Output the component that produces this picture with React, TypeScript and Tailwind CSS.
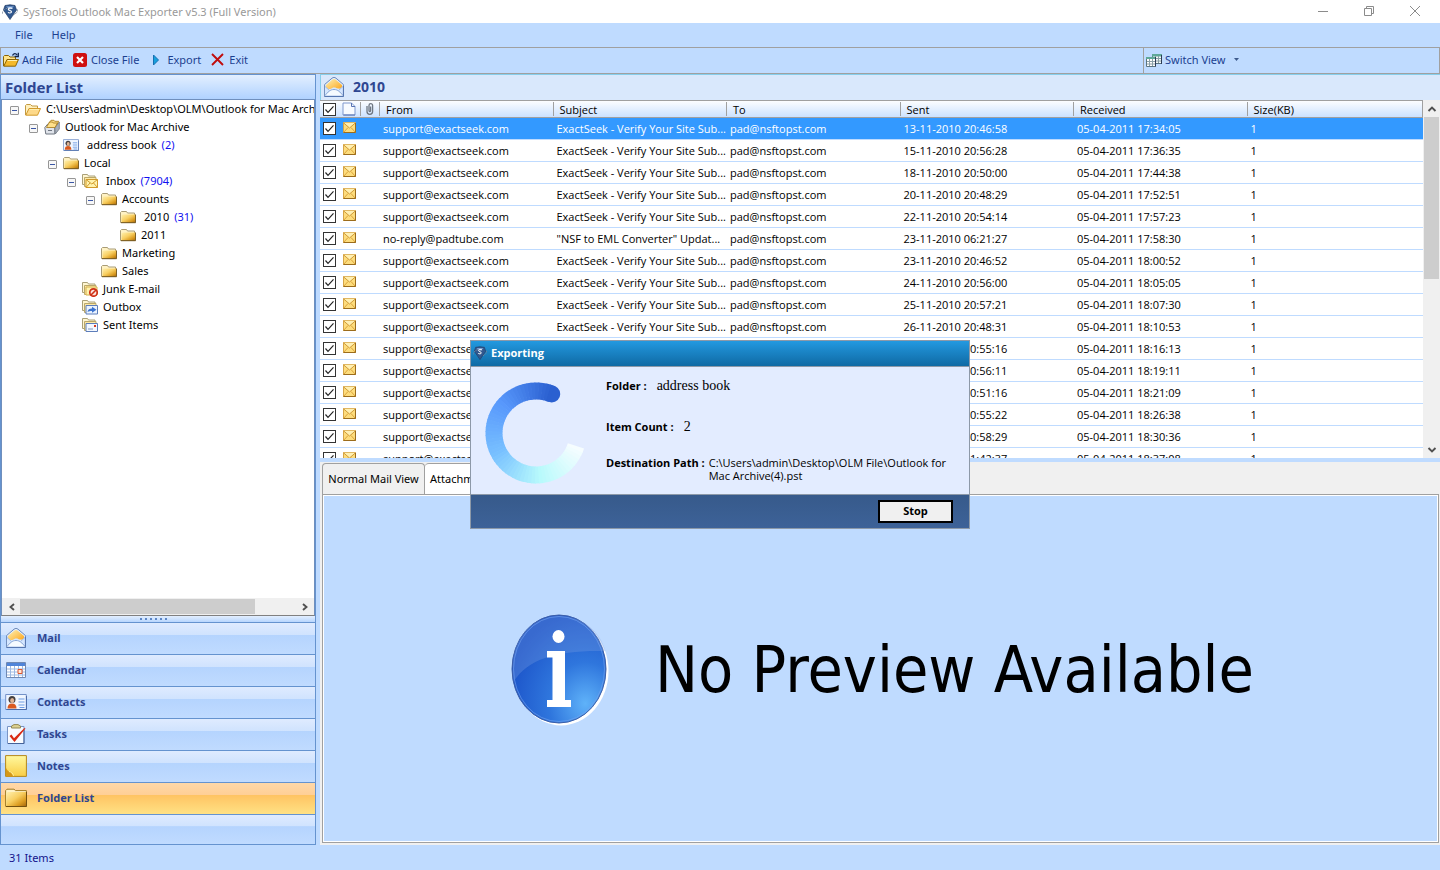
import React from "react";

type IconProps = { className?: string };

function AppLogo({ className = "h-4 w-4" }: IconProps) {
  return (
    <svg viewBox="0 0 16 16" className={className} aria-hidden="true">
      <path d="M3 1.500 8 .8l5 .7 1.500 4.500L8 15.500 1.500 6Z" fill="#31588f" stroke="#1f3b66" strokeWidth=".7" />
      <path d="M4 2.500h8l-4 3Z" fill="#8fb4e6" />
      <path d="M10.400 4.600C9 3.600 6 3.900 6.400 5.500c.3 1.300 3.300.8 3.100 2.500-.2 1.300-2.500 1.200-3.500.4" fill="none" stroke="#fff" strokeWidth="1.100" />
      <path d="M.5 9.500C0 7 3 4.500 6 4M15.500 5.500c.5 2.500-2 4.500-4 5.500" fill="none" stroke="#7a8798" strokeWidth="1" strokeDasharray="2 1" />
    </svg>
  );
}

function OpenFolder({ arrow = false }: { arrow?: boolean }) {
  return (
    <svg viewBox="0 0 16 16" className="h-4 w-4 shrink-0" aria-hidden="true">
      <path d="M.5 14V4.500l1-1h4l1.500 1.500h5.500v3" fill={arrow ? "#ffe48a" : "#fff0bd"} stroke={arrow ? "#8a6508" : "#c39a42"} />
      <path d="M.8 14.200 4 7.500h11.500l-3 6.700Z" fill={arrow ? "#f4b92a" : "#fdd98a"} stroke={arrow ? "#8a6508" : "#d29a2c"} />
      <path d="M4.600 8.500h9.500" stroke="#fff0b0" />
      {arrow && <path d="M9.500 3.500c1-2.500 3.500-2.500 4.500-.5M15.300.8v3.700h-3.700" fill="none" stroke="#12264f" strokeWidth="1.300" />}
    </svg>
  );
}

function Folder({ className = "h-4 w-4 shrink-0" }: IconProps) {
  return (
    <svg viewBox="0 0 16 16" className={className} aria-hidden="true">
      <path d="M.5 13.500V3.500l1-1h5l1 1.500h7v9.500Z" fill="#fff2c4" stroke="#a99c76" />
      <path d="M1.500 13.500V6l1.500-.5h12.500v8Z" fill="url(#folderGold)" />
      <path d="M1 13.700h14.600V5.500" fill="none" stroke="#73551b" />
    </svg>
  );
}

function MiniFolder({ children }: { children: React.ReactNode }) {
  return (
    <svg viewBox="0 0 16 16" className="h-4 w-4 shrink-0" aria-hidden="true">
      <path d="M.5 11.500V1.500h5L6.500 3H13v8.500Z" fill="#fff6d2" stroke="#aaa078" />
      <path d="M2.500 13.500v-9h11.500v9Z" fill="#fde9a6" stroke="#bba86a" />
      {children}
    </svg>
  );
}

function InboxIcon() {
  return (
    <MiniFolder>
      <path d="M4 6.500h11.500v8H4Z" fill="#fff3ad" stroke="#d19a2c" />
      <path d="m4 6.500 5.800 4.500 5.700-4.500M4 14.500l4-4.500M15.500 14.500l-4-4.500" fill="none" stroke="#d19a2c" />
    </MiniFolder>
  );
}

function JunkIcon() {
  return (
    <MiniFolder>
      <path d="M4 6h11v8H4Z" fill="#fff3ad" stroke="#d4b050" />
      <circle cx="11.500" cy="11.500" r="3.700" fill="#fbe3dc" stroke="#cf2f14" strokeWidth="1.700" />
      <path d="m14 9-5 5" stroke="#cf2f14" strokeWidth="1.600" />
    </MiniFolder>
  );
}

function OutboxIcon() {
  return (
    <MiniFolder>
      <path d="M4 6.500h11.500v8.500H4Z" fill="#eaf3ff" stroke="#5c7dba" />
      <path d="M5.500 13c.3-2.500 2-3.500 4.500-3.500V7.700l4.500 3.100-4.500 3v-1.800c-2 0-3 .2-4.500 1Z" fill="#3c74d0" />
    </MiniFolder>
  );
}

function SentIcon() {
  return (
    <MiniFolder>
      <path d="M4 6.500h11.500v8H4Z" fill="#f3f8ff" stroke="#5c7dba" />
      <path d="M12 8h2v2h-2Z" fill="#d33a22" />
      <path d="M6 12h5" stroke="#7f98c4" />
    </MiniFolder>
  );
}

function ArchiveIcon() {
  return (
    <svg viewBox="0 0 16 16" className="h-4 w-4 shrink-0" aria-hidden="true">
      <path d="m.8 8.500 3-3.500h9l-2 4v6H1.800Z" fill="#dfe3ea" stroke="#6f7681" />
      <path d="m10.800 9 4.500-6v7l-4 5Z" fill="#a7afbb" stroke="#6f7681" strokeWidth=".8" />
      <path d="M3 7.500 5.500 3h3l.7 1h4.300L11 8.500H2.500ZM5 4l2-2.700h3l.7 1h4L13 5.500" fill="#ffe08a" stroke="#ac8227" strokeWidth=".9" />
      <path d="M4 11.500h4" stroke="#6f7681" />
    </svg>
  );
}

function ContactCard({ className = "h-4 w-4 shrink-0" }: IconProps) {
  return (
    <svg viewBox="0 0 22 18" className={className} aria-hidden="true">
      <path d="M.7 1.500h20.600v15H.7Z" fill="#f0f6ff" stroke="#7391c8" />
      <path d="M1.500 16.500h20V3" fill="none" stroke="#4b6ba8" />
      <path d="M2.500 15.500c0-3.500 1.500-5 4.500-5s4.500 1.500 4.500 5Z" fill="#d9591f" />
      <circle cx="7" cy="6.500" r="3.500" fill="#454040" />
      <ellipse cx="7.200" cy="7.500" rx="2" ry="2.600" fill="#dfb394" />
      <path d="M13.500 6h6M13.500 9h6M13.500 12h6M14.500 14.500h5" stroke="#6c9be4" strokeWidth="1.200" />
    </svg>
  );
}

function OpenMail({ className = "h-5 w-5" }: IconProps) {
  return (
    <svg viewBox="0 0 20 20" className={className} aria-hidden="true">
      <path d="M.6 7.500 8 1.200c1.500-1 2.500-1 4 0l7.400 6.300v12H.6Z" fill="#e2efff" stroke="#6c88b8" />
      <path d="M2 8 8.500 2.500c1-.8 2-.8 3 0L18 8v4L10 11l-8 2Z" fill="url(#mailGold)" />
      <path d="M1 9.500 6 13l3-2.500h2.500L14 13l5-3.500V19H1Z" fill="#d5e7ff" />
      <path d="M1 18.500c3-3.500 5-6 9-6s6 2.500 9 6" fill="#f6fbff" stroke="#86a5d6" />
      <path d="m1 9.500 4.500 4M19 9.500l-4.500 4" stroke="#a3bce4" />
      <path d="M.6 19.400h18.800V9" fill="none" stroke="#5576af" />
    </svg>
  );
}

function CalendarIcon() {
  return (
    <svg viewBox="0 0 22 18" className="h-[18px] w-[22px]" aria-hidden="true">
      <path d="M1.500 1.500h19v15h-19Z" fill="#fff" stroke="#7089b3" />
      <path d="M2 2h18v3H2Z" fill="#4f84d9" />
      <path d="M5.500 5v11M9.500 5v11M13.500 5v11M17.500 5v11M2 8h18M2 11h18M2 14h18" stroke="#9db9e2" />
      <path d="M13 8.500h4v4h-4Z" fill="#ffe4d5" stroke="#e0562a" />
    </svg>
  );
}

function TasksIcon() {
  return (
    <svg viewBox="0 0 20 20" className="h-5 w-5" aria-hidden="true">
      <path d="M1.500 2.500h16.500v17H1.500Z" fill="#f8fbff" stroke="#7994c5" />
      <path d="M2 19.500h16V6" fill="none" stroke="#456399" />
      <path d="M5.500 4V2L8 .6h4L14.500 2v2Z" fill="#dcd191" stroke="#938955" />
      <path d="M3.500 12 5.500 10.500l2.500 3.700L18.500 4l1 .5L8.500 18Z" fill="#d92913" />
    </svg>
  );
}

function NotesIcon() {
  return (
    <svg viewBox="0 0 22 22" className="h-[22px] w-[22px]" aria-hidden="true">
      <path d="M.6.6h20.800v20.800H.6Z" fill="url(#noteGold)" stroke="#b5871b" />
      <path d="M1 13c1.500 3 3.500 4 5 4 .5 2 2 3.500 4.500 4.400H1Z" fill="#d69818" />
      <path d="M4 16.500c2 .5 4 1.500 4.500 4.500" stroke="#fff09c" fill="none" />
    </svg>
  );
}

function BigFolder() {
  return (
    <svg viewBox="0 0 22 20" className="h-5 w-[22px]" aria-hidden="true">
      <path d="M.6 18.400V2.600L2 1.200h7l1.500 1.400h10.900v15.800Z" fill="#fff2c4" stroke="#a07a22" />
      <path d="M1.200 18V5.500L2.500 4h18.500v14Z" fill="url(#folderGold)" />
      <path d="M1 18.500h20.500V4" fill="none" stroke="#73500f" />
    </svg>
  );
}

function SwitchIcon() {
  return (
    <svg viewBox="0 0 16 14" className="h-[14px] w-4" aria-hidden="true">
      <path d="M6.500 1.500h9v9h-9Z" fill="#f5faf8" stroke="#5b7480" />
      <path d="M6 1h10v2.500H6Z" fill="#5fa898" />
      <path d="M9.500 3v7M12.500 3v7M7 5.500h8M7 8h8" stroke="#8ba0a8" />
      <path d="M.5 4.500h9v9h-9Z" fill="#fff" stroke="#5b7480" />
      <path d="M0 4h10v2H0Z" fill="#5fa898" />
      <path d="M3.500 6v7M6.500 6v7M1 8.500h8M1 11h8" stroke="#8ba0a8" />
      <path d="M9.500 4v9.500M15.500 2v9" stroke="#2c3c56" />
    </svg>
  );
}

function MailIcon() {
  return (
    <svg viewBox="0 0 13 11" className="mb-[2px] h-[11px] w-[13px]" aria-hidden="true">
      <path d="M.5.5h12v10H.5Z" fill="#fddc7c" stroke="#d6a548" />
      <path d="m.5 10.500 4.500-5M12.500 10.500 8 5.500" stroke="#dba43c" />
      <path d="m.5.800 6 5.200 6-5.200" fill="#fff0b2" stroke="#d09a38" />
      <path d="M.5 10.500h12V1" stroke="#9b6c1c" fill="none" />
    </svg>
  );
}

function Chevron({ d }: { d: string }) {
  return (
    <svg viewBox="0 0 10 10" className="h-[10px] w-[10px]" aria-hidden="true">
      <path d={d} fill="none" stroke="#505050" strokeWidth="1.900" />
    </svg>
  );
}

function Check({ label }: { label: string }) {
  return (
    <label className="ml-[3px] grid h-[13px] w-[13px]">
      <input
        type="checkbox"
        defaultChecked
        aria-label={label}
        className="peer col-start-1 row-start-1 h-[13px] w-[13px] appearance-none border border-[#333] bg-white"
      />
      <svg viewBox="0 0 13 13" className="pointer-events-none col-start-1 row-start-1 hidden h-[13px] w-[13px] peer-checked:block" aria-hidden="true">
        <path d="m2.500 6.500 2.500 2.800 5.500-6" fill="none" stroke="#222" strokeWidth="1.200" />
      </svg>
    </label>
  );
}

type Node = { name: string; depth: number; icon: React.ReactNode; open?: boolean; count?: string };

const tree: Node[] = [
  { name: "C:\\Users\\admin\\Desktop\\OLM\\Outlook for Mac Archive.olm", depth: 0, icon: <OpenFolder />, open: true },
  { name: "Outlook for Mac Archive", depth: 1, icon: <ArchiveIcon />, open: true },
  { name: "address book", depth: 2, icon: <ContactCard />, count: "(2)" },
  { name: "Local", depth: 2, icon: <Folder />, open: true },
  { name: "Inbox", depth: 3, icon: <InboxIcon />, open: true, count: "(7904)" },
  { name: "Accounts", depth: 4, icon: <Folder />, open: true },
  { name: "2010", depth: 5, icon: <Folder />, count: "(31)" },
  { name: "2011", depth: 5, icon: <Folder /> },
  { name: "Marketing", depth: 4, icon: <Folder /> },
  { name: "Sales", depth: 4, icon: <Folder /> },
  { name: "Junk E-mail", depth: 3, icon: <JunkIcon /> },
  { name: "Outbox", depth: 3, icon: <OutboxIcon /> },
  { name: "Sent Items", depth: 3, icon: <SentIcon /> },
];

const indents = ["pl-[8px]", "pl-[27px]", "pl-[46px]", "pl-[65px]", "pl-[84px]", "pl-[103px]"];

const times: [string, string][] = [
  ["13-11-2010 20:46:58", "05-04-2011 17:34:05"],
  ["15-11-2010 20:56:28", "05-04-2011 17:36:35"],
  ["18-11-2010 20:50:00", "05-04-2011 17:44:38"],
  ["20-11-2010 20:48:29", "05-04-2011 17:52:51"],
  ["22-11-2010 20:54:14", "05-04-2011 17:57:23"],
  ["23-11-2010 06:21:27", "05-04-2011 17:58:30"],
  ["23-11-2010 20:46:52", "05-04-2011 18:00:52"],
  ["24-11-2010 20:56:00", "05-04-2011 18:05:05"],
  ["25-11-2010 20:57:21", "05-04-2011 18:07:30"],
  ["26-11-2010 20:48:31", "05-04-2011 18:10:53"],
  ["27-11-2010 20:55:16", "05-04-2011 18:16:13"],
  ["28-11-2010 20:56:11", "05-04-2011 18:19:11"],
  ["29-11-2010 20:51:16", "05-04-2011 18:21:09"],
  ["30-11-2010 20:55:22", "05-04-2011 18:26:38"],
  ["01-12-2010 20:58:29", "05-04-2011 18:30:36"],
  ["02-12-2010 21:42:37", "05-04-2011 18:37:08"],
];

const navItems = [
  { name: "Mail", icon: <OpenMail /> },
  { name: "Calendar", icon: <CalendarIcon /> },
  { name: "Contacts", icon: <ContactCard className="h-[18px] w-[22px]" /> },
  { name: "Tasks", icon: <TasksIcon /> },
  { name: "Notes", icon: <NotesIcon /> },
  { name: "Folder List", icon: <BigFolder /> },
];

const columns = ["From", "Subject", "To", "Sent", "Received", "Size(KB)"];

function Gradients() {
  return (
    <svg className="absolute h-0 w-0" aria-hidden="true">
      <defs>
        <linearGradient id="folderGold" x1="0" y1="0" x2="1" y2="1">
          <stop offset="0" stopColor="#fff0ae" />
          <stop offset=".45" stopColor="#f8cf62" />
          <stop offset=".75" stopColor="#dc9d22" />
          <stop offset="1" stopColor="#a86a10" />
        </linearGradient>
        <linearGradient id="mailGold" x1="0" y1="0" x2="1" y2="1">
          <stop offset="0" stopColor="#fff2b5" />
          <stop offset="1" stopColor="#fba419" />
        </linearGradient>
        <linearGradient id="noteGold" x1="0" y1="0" x2="0" y2="1">
          <stop offset="0" stopColor="#fff9a0" />
          <stop offset="1" stopColor="#f9cd45" />
        </linearGradient>
        <radialGradient id="infoBlue" cx=".78" cy=".82" r=".85">
          <stop offset="0" stopColor="#5fb2f9" />
          <stop offset=".45" stopColor="#2f76dd" />
          <stop offset="1" stopColor="#1b52c8" />
        </radialGradient>
      </defs>
    </svg>
  );
}

function TitleBar() {
  return (
    <header className="flex h-[23px] shrink-0 items-center bg-white pr-[2px] pl-[2px]">
      <AppLogo />
      <h1 className="ml-[5px] flex-1 text-[11px] text-[#999]">SysTools Outlook Mac Exporter v5.3 (Full Version)</h1>
      <div className="flex h-[21px] self-start text-[#8b8b8b]">
        <button aria-label="Minimize" className="grid w-[46px] place-items-center">
          <svg viewBox="0 0 12 12" className="h-3 w-3"><path d="M1 6.500h10" stroke="currentColor" /></svg>
        </button>
        <button aria-label="Restore" className="grid w-[46px] place-items-center">
          <svg viewBox="0 0 12 12" className="h-3 w-3" fill="none" stroke="currentColor"><path d="M1.500 3.500h7v7h-7ZM3.500 3.500v-2h7v7h-2" /></svg>
        </button>
        <button aria-label="Close" className="grid w-[46px] place-items-center">
          <svg viewBox="0 0 12 12" className="h-3 w-3" stroke="currentColor"><path d="m1 1 10 10M11 1 1 11" /></svg>
        </button>
      </div>
    </header>
  );
}

function Toolbar() {
  return (
    <div className="flex h-[27px] shrink-0 border border-[#a0a0a0] text-[#1b3f90]">
      <div className="flex flex-1 items-center gap-[10px] pb-[2px] pl-[2px]">
        <button className="flex items-center gap-[3px]"><OpenFolder arrow />Add File</button>
        <button className="flex items-center gap-[4px]">
          <svg viewBox="0 0 14 14" className="h-[14px] w-[14px]" aria-hidden="true">
            <rect width="14" height="14" rx="2.500" fill="#cf1010" />
            <path d="m4 4 6 6M10 4l-6 6" stroke="#fff" strokeWidth="2.200" />
          </svg>
          Close File
        </button>
        <button className="ml-[3px] flex items-center gap-[7px]">
          <svg viewBox="0 0 8 12" className="h-3 w-2" aria-hidden="true"><path d="M1.500 1v10l5-5Z" fill="#16a0dc" stroke="#1670b2" /></svg>
          Export
        </button>
        <button className="flex items-center gap-[5px]">
          <svg viewBox="0 0 13 13" className="h-[13px] w-[13px]" aria-hidden="true"><path d="m1 1 11 11M12 1 1 12" stroke="#c00d0d" strokeWidth="1.900" /></svg>
          Exit
        </button>
      </div>
      <div className="flex w-[296px] items-center border-l border-[#a0a0a0] pb-[2px] pl-[2px]">
        <button className="flex items-center gap-[3px]">
          <SwitchIcon />
          Switch View
          <svg viewBox="0 0 5 3" className="ml-[5px] h-[3px] w-[5px]" aria-hidden="true"><path d="M0 0h5L2.500 3Z" fill="#3d5a8c" /></svg>
        </button>
      </div>
    </div>
  );
}

function Sidebar() {
  return (
    <aside className="flex w-[316px] shrink-0 flex-col border border-[#6593cf]">
      <h2 className="flex h-[24px] shrink-0 items-center bg-linear-to-b from-[#e3efff] to-[#b0d2ff] pl-[4px] text-[15px] font-bold text-[#2f4691]">
        Folder List
      </h2>
      <div className="flex min-h-0 flex-1 flex-col border border-[#6f8fbd] border-b-[#808080] bg-white">
        <ul className="min-h-0 flex-1 overflow-hidden text-black">
          {tree.map((n) => (
            <li key={n.name} className={`flex h-[18px] items-center whitespace-nowrap ${indents[n.depth]}`}>
              <span className="flex w-[15px] shrink-0 pt-[3px]">
                {n.open && (
                  <button aria-label={`Collapse ${n.name}`} className="grid h-[9px] w-[9px] place-items-center rounded-[1px] border border-[#969696] bg-[#f7f7f7]">
                    <span className="block h-px w-[5px] bg-[#3a56a5]" />
                  </button>
                )}
              </span>
              {n.icon}
              <span className={n.count ? "ml-[8px]" : "ml-[5px]"}>{n.name}</span>
              {n.count && <span className="ml-[5px] text-[#1010f0]">{n.count}</span>}
            </li>
          ))}
        </ul>
        <div className="flex h-[17px] shrink-0 items-center bg-[#f0f0f0] px-px">
          <button aria-label="Scroll left" className="grid w-[17px] place-items-center"><Chevron d="M7 2 3.500 5 7 8" /></button>
          <div className="h-[15px] flex-1"><div className="h-full w-[85%] bg-[#cdcdcd]" /></div>
          <button aria-label="Scroll right" className="grid w-[17px] place-items-center"><Chevron d="M3 2l3.500 3L3 8" /></button>
        </div>
      </div>
      <div className="flex h-[6px] shrink-0 items-center justify-center gap-[3px] bg-linear-to-b from-[#e3efff] to-[#b8d6fe] pr-[10px]">
        {[0, 1, 2, 3, 4, 5].map((i) => <span key={i} className="h-[2px] w-[2px] bg-[#5c86c6]" />)}
      </div>
      <nav className="shrink-0">
        {navItems.map((n) => (
          <button
            key={n.name}
            className={`flex h-8 w-full items-center border-t border-[#6593cf] pb-px pl-[4px] text-[11px] font-bold text-[#2f4691] ${
              n.name === "Folder List"
                ? "bg-[linear-gradient(#ffd8a8,#ffcf96_38%,#ffc463_40%,#ffe184)]"
                : "bg-[linear-gradient(#dfebff,#d0e3fe_38%,#b5d4fe_40%,#c0dbff)]"
            }`}
          >
            <span className="grid w-[22px] place-items-center">{n.icon}</span>
            <span className="ml-[10px]">{n.name}</span>
          </button>
        ))}
        <div className="h-[30px] border-t border-[#6593cf] bg-[linear-gradient(#dfebff,#d0e3fe_38%,#b5d4fe_40%,#c0dbff)]" />
      </nav>
    </aside>
  );
}

function MessageList() {
  return (
    <section className="flex min-h-0 flex-[1.01] flex-col">
      <h2 className="flex h-[26px] shrink-0 items-center gap-[9px] border-t border-l border-[#87ceeb] bg-[#d9e8fc] pb-px pl-[3px] text-[14px] font-bold text-[#2f4691]">
        <OpenMail />
        2010
      </h2>
      <div className="flex min-h-0 flex-1 bg-white">
        <div className="min-w-0 flex-1 overflow-hidden">
          <table className="w-full table-fixed border-separate border-spacing-0 text-left font-['Open_Sans','Noto_Sans',sans-serif] text-black">
            <colgroup>
              <col className="w-[22px]" />
              <col className="w-[18px]" />
              <col className="w-[19px]" />
              {columns.map((c) => <col key={c} className={c === "Size(KB)" ? "" : "w-[15.73%]"} />)}
            </colgroup>
            <thead>
              <tr className="h-[18px] bg-linear-to-b from-white to-[#c9e0ff]">
                <th className="border-y border-[#a0a0a0] p-0"><Check label="Select all" /></th>
                <th className="border-y border-[#a0a0a0] p-0">
                  <svg viewBox="0 0 14 14" className="h-[14px] w-[14px]" role="img" aria-label="Type">
                    <path d="M1 1h8.500L13 4.500V13H1Z" fill="#f8fbff" stroke="#7e98cd" />
                    <path d="M9.500 1v3.500H13M13 13H1.500" fill="none" stroke="#5874b4" />
                  </svg>
                </th>
                <th className="border-y border-[#a0a0a0] p-0">
                  <span className="flex h-[14px] items-center border-l border-[#a0a0a0] pl-[4px]">
                    <svg viewBox="0 0 10 12" className="h-3 w-[10px]" role="img" aria-label="Attachment">
                      <path d="M2 3v5.500a2.800 2.800 0 0 0 5.600 0V2.500a1.800 1.800 0 0 0-3.600 0v5.300c0 1 1.600 1 1.600 0V3.500" fill="none" stroke="#6f7782" strokeWidth="1.300" />
                    </svg>
                  </span>
                </th>
                {columns.map((c) => (
                  <th key={c} className="border-y border-[#a0a0a0] p-0 font-normal last:border-r">
                    <span className="block h-[14px] border-l border-[#a0a0a0] pl-[6px] leading-[15px]">{c}</span>
                  </th>
                ))}
              </tr>
            </thead>
            <tbody>
              {times.map(([sent, received], i) => (
                <tr key={sent} className={`h-[22px] ${i === 0 ? "bg-[#3399ff] text-white" : ""}`}>
                  <td className="border-b border-[#bfdbff] p-0"><Check label={`Select message ${i + 1}`} /></td>
                  <td className="border-b border-[#bfdbff] p-0 pl-px"><MailIcon /></td>
                  <td className="border-b border-[#bfdbff] p-0" />
                  <td className="truncate border-b border-[#bfdbff] p-0 pl-[4px]">{i === 5 ? "no-reply@padtube.com" : "support@exactseek.com"}</td>
                  <td className="truncate border-b border-[#bfdbff] p-0 pl-[4px]">{i === 5 ? "\"NSF to EML Converter\" Updat..." : "ExactSeek - Verify Your Site Sub..."}</td>
                  <td className="truncate border-b border-[#bfdbff] p-0 pl-[4px]">pad@nsftopst.com</td>
                  <td className="truncate border-b border-[#bfdbff] p-0 pl-[4px]">{sent}</td>
                  <td className="truncate border-b border-[#bfdbff] p-0 pl-[4px]">{received}</td>
                  <td className="truncate border-b border-[#bfdbff] p-0 pl-[4px]">1</td>
                </tr>
              ))}
            </tbody>
          </table>
        </div>
        <div className="flex w-[17px] shrink-0 flex-col items-center bg-[#f0f0f0]">
          <button aria-label="Scroll up" className="grid h-[17px] place-items-center"><Chevron d="M1.500 7 5 3.500 8.500 7" /></button>
          <div className="w-[15px] flex-1"><div className="h-1/2 w-full bg-[#cdcdcd]" /></div>
          <button aria-label="Scroll down" className="grid h-[17px] place-items-center"><Chevron d="M1.500 3 5 6.500 8.500 3" /></button>
        </div>
      </div>
    </section>
  );
}

function InfoIcon() {
  return (
    <svg viewBox="0 0 98 112" className="h-[112px] w-[98px] shrink-0" aria-hidden="true">
      <ellipse cx="50" cy="57" rx="47.500" ry="54.500" fill="#fff" />
      <ellipse cx="48" cy="55" rx="47" ry="54" fill="url(#infoBlue)" stroke="#3d5fa8" />
      <path d="M3 67C18 44 47 36 94.500 37 89 17 71 2 48 2 20 2 1 26 2 55c0 5 .3 8 1 12Z" fill="#7fa1e0" opacity=".3" />
      <ellipse cx="48" cy="55" rx="45.500" ry="52.500" fill="none" stroke="#75a3ee" opacity=".6" />
      <ellipse cx="47.500" cy="22.500" rx="6" ry="6.500" fill="#fff" />
      <path d="M36 37h18v49h6v7H36v-7h5.500V43.500H36Z" fill="#fff" />
    </svg>
  );
}

function Preview() {
  return (
    <section className="mt-1 flex min-h-0 flex-1 flex-col bg-[#f0f0f0] pr-px pb-[2px] pl-[2px]">
      <div className="flex h-[32px] shrink-0 items-end" role="tablist">
        <button role="tab" aria-selected="false" className="h-[31px] w-[103px] rounded-t-[4px] border border-b-0 border-[#a0a0a0] bg-[#f0f0f0] text-black">
          Normal Mail View
        </button>
        <button role="tab" aria-selected="true" className="h-[31px] rounded-t-[4px] border-t border-r border-[#a0a0a0] bg-white px-[5px] text-black">
          Attachments
        </button>
      </div>
      <div className="flex flex-1 border border-[#a0a0a0] bg-white p-px">
        <div className="flex flex-1 items-center justify-center gap-[46px] bg-[#bfdbff] pt-[2px] pl-[4px]">
          <InfoIcon />
          <p className="font-['DejaVu_Sans_Condensed','DejaVu_Sans',sans-serif] text-[64px] leading-[72px] whitespace-nowrap text-black">No Preview Available</p>
        </div>
      </div>
    </section>
  );
}

function Spinner() {
  const cx = 52;
  const cy = 51;
  const r = 42;
  const steps = 60;
  const stops = [[43, 96, 208], [88, 152, 252], [120, 192, 255], [184, 250, 252], [250, 253, 255]];
  const colour = (t: number) => {
    const p = Math.min(t * 4, 3.999);
    const i = Math.floor(p);
    const f = p - i;
    return `rgb(${stops[i].map((v, k) => Math.round(v + (stops[i + 1][k] - v) * f)).join(",")})`;
  };
  const at = (t: number) => {
    const a = ((-68 - t * 274) * Math.PI) / 180;
    return [cx + r * Math.cos(a), cy + r * Math.sin(a)];
  };
  return (
    <svg viewBox="0 0 104 104" className="h-[104px] w-[104px] shrink-0" role="img" aria-label="Export in progress">
      <circle cx={at(0)[0]} cy={at(0)[1]} r="8.500" fill="#2b60d0" />
      {Array.from({ length: steps }, (_, i) => (
        <path
          key={i}
          d={`M${at(i / steps).join(" ")} A${r} ${r} 0 0 0 ${at(Math.min(1, (i + 1.2) / steps)).join(" ")}`}
          fill="none"
          stroke={colour(i / steps)}
          strokeWidth="17"
        />
      ))}
    </svg>
  );
}

function ExportDialog() {
  return (
    <div className="pointer-events-none fixed inset-0 flex items-center justify-center pb-[2px]">
      <div role="dialog" aria-labelledby="export-title" className="pointer-events-auto w-[500px] border border-[#8d99a8] bg-[#e3ecff] font-['Open_Sans','Noto_Sans',sans-serif] text-black">
        <h2 id="export-title" className="flex h-[26px] items-center gap-[4px] border-b border-[#8d99a8] bg-linear-to-b from-[#2399e0] to-[#0f6aa4] pl-[2px] font-bold text-white">
          <AppLogo className="h-[14px] w-[14px]" />
          Exporting
        </h2>
        <div className="flex h-[127px] pt-[15px] pl-[13px]">
          <Spinner />
          <dl className="-mt-[3px] ml-[18px] flex flex-1 flex-col leading-[13px]">
            <div className="flex h-[41px]">
              <dt className="font-bold">Folder :</dt>
              <dd className="ml-[10px] font-['Liberation_Serif',serif] text-[14px]">address book</dd>
            </div>
            <div className="flex h-[36px]">
              <dt className="font-bold">Item Count :</dt>
              <dd className="ml-[10px] font-['Liberation_Serif',serif] text-[14px]">2</dd>
            </div>
            <div className="flex">
              <dt className="shrink-0 font-bold">Destination Path :</dt>
              <dd className="ml-[4px] w-[246px]">C:\Users\admin\Desktop\OLM File\Outlook for Mac Archive(4).pst</dd>
            </div>
          </dl>
        </div>
        <div className="flex h-[34px] items-center justify-end border-t border-[#8d99a8] bg-linear-to-b from-[#375a8b] to-[#3d6298] pr-[16px]">
          <button className="h-[23px] w-[75px] border-2 border-black bg-[#f0f0f0] font-bold">Stop</button>
        </div>
      </div>
    </div>
  );
}

export default function App() {
  return (
    <div className="flex h-screen flex-col overflow-hidden bg-[#bfdbff] font-['Noto_Sans','Open_Sans',sans-serif] text-[11px] leading-[16px]">
      <Gradients />
      <TitleBar />
      <nav className="flex h-6 shrink-0 items-center gap-[19px] pl-[15px] text-[#1b3f90]">
        <button>File</button>
        <button>Help</button>
      </nav>
      <Toolbar />
      <main className="flex min-h-0 flex-1">
        <Sidebar />
        <div className="ml-1 flex min-w-0 flex-1 flex-col">
          <MessageList />
          <Preview />
        </div>
      </main>
      <footer className="flex h-[25px] shrink-0 items-center pl-[9px] text-[#14148c]">31 Items</footer>
      <ExportDialog />
    </div>
  );
}
